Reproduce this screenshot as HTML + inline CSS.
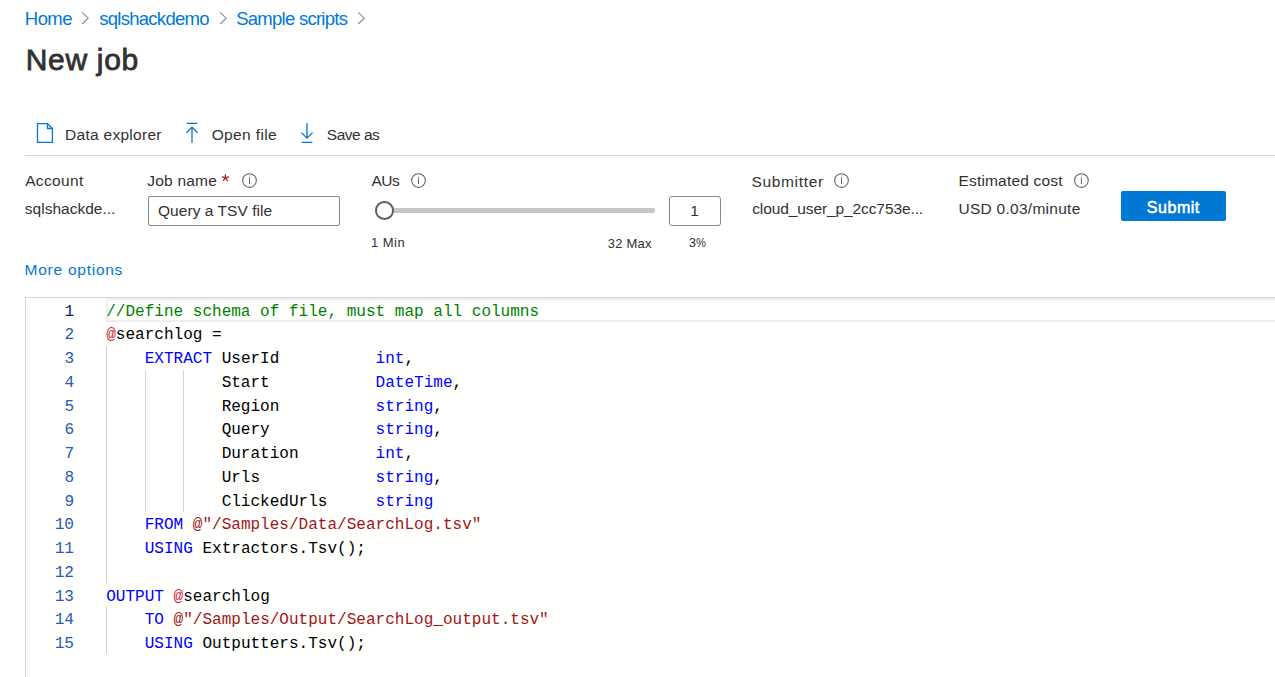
<!DOCTYPE html>
<html><head><meta charset="utf-8"><title>New job</title>
<style>
html,body{margin:0;padding:0;background:#ffffff;width:1275px;height:677px;overflow:hidden;position:relative}
.t{position:absolute;white-space:pre;line-height:1.2}
.ln{position:absolute;left:20px;width:54px;text-align:right;font-family:'Liberation Mono', monospace;font-size:16.05px;line-height:23.76px;height:23.76px;white-space:pre}
.code{position:absolute;left:106.2px;font-family:'Liberation Mono', monospace;font-size:16.05px;line-height:23.76px;height:23.76px;white-space:pre;color:#000}
</style></head><body>
<div class="t" style="left:24.86px;top:7.98px;font-size:18.5px;color:#0078d4;font-weight:400;letter-spacing:-0.568px;font-family:'Liberation Sans', sans-serif;">Home</div>
<div class="t" style="left:99.18px;top:8px;font-size:18.5px;color:#0078d4;font-weight:400;letter-spacing:-0.718px;font-family:'Liberation Sans', sans-serif;">sqlshackdemo</div>
<div class="t" style="left:236.16px;top:8px;font-size:18.5px;color:#0078d4;font-weight:400;letter-spacing:-0.733px;font-family:'Liberation Sans', sans-serif;">Sample scripts</div>
<svg style="position:absolute;left:81px;top:10px" width="10" height="16" viewBox="0 0 10 16"><path d="M1.2 2.3 L7.2 8.2 L1.2 14.0" fill="none" stroke="#8a8886" stroke-width="1.05"/></svg>
<svg style="position:absolute;left:219px;top:10px" width="10" height="16" viewBox="0 0 10 16"><path d="M1.2 2.3 L7.2 8.2 L1.2 14.0" fill="none" stroke="#8a8886" stroke-width="1.05"/></svg>
<svg style="position:absolute;left:357px;top:10px" width="10" height="16" viewBox="0 0 10 16"><path d="M1.2 2.3 L7.2 8.2 L1.2 14.0" fill="none" stroke="#8a8886" stroke-width="1.05"/></svg>
<div class="t" style="left:25.69px;top:42.24px;font-size:30px;color:#323130;font-weight:400;letter-spacing:0.688px;font-family:'Liberation Sans', sans-serif;-webkit-text-stroke:0.8px #323130;">New job</div>
<svg style="position:absolute;left:36px;top:122px" width="19" height="22" viewBox="0 0 19 22"><path d="M1.5 1.6 H11.5 L16.4 6.5 V20.3 H1.5 Z M11.5 1.6 V6.5 H16.4" fill="none" stroke="#0078d4" stroke-width="1.3" stroke-linejoin="miter"/></svg>
<div class="t" style="left:65.0px;top:125.72px;font-size:15.5px;color:#323130;font-weight:400;letter-spacing:0.286px;font-family:'Liberation Sans', sans-serif;">Data explorer</div>
<svg style="position:absolute;left:184px;top:121px" width="16" height="23" viewBox="0 0 16 23"><path d="M2.6 2.4 H13.4 M8 6.6 V21.8 M2.4 11.7 L8 6.1 L13.6 11.7" fill="none" stroke="#0078d4" stroke-width="1.3"/></svg>
<div class="t" style="left:211.69px;top:125.72px;font-size:15.5px;color:#323130;font-weight:400;letter-spacing:0.375px;font-family:'Liberation Sans', sans-serif;">Open file</div>
<svg style="position:absolute;left:299px;top:121px" width="16" height="23" viewBox="0 0 16 23"><path d="M2.6 21.4 H13.4 M8 2 V16.6 M2.4 11.6 L8 17.2 L13.6 11.6" fill="none" stroke="#0078d4" stroke-width="1.3"/></svg>
<div class="t" style="left:326.83px;top:125.72px;font-size:15.5px;color:#323130;font-weight:400;letter-spacing:-0.499px;font-family:'Liberation Sans', sans-serif;">Save as</div>
<div style="position:absolute;left:25px;top:155px;width:1250px;height:1px;background:#d4d4d4"></div>
<div class="t" style="left:25.18px;top:172.26px;font-size:15.5px;color:#323130;font-weight:400;letter-spacing:0.362px;font-family:'Liberation Sans', sans-serif;">Account</div>
<div class="t" style="left:24.85px;top:200px;font-size:15.5px;color:#323130;font-weight:400;letter-spacing:0.001px;font-family:'Liberation Sans', sans-serif;">sqlshackde...</div>
<div class="t" style="left:147.31px;top:172.24px;font-size:15.5px;color:#323130;font-weight:400;letter-spacing:0.206px;font-family:'Liberation Sans', sans-serif;">Job name</div>
<svg style="position:absolute;left:218px;top:170px" width="16" height="16" viewBox="0 0 16 16"><path d="M7.45 7.85 L7.45 4.65 M7.45 7.85 L10.49 6.86 M7.45 7.85 L9.33 10.44 M7.45 7.85 L5.57 10.44 M7.45 7.85 L4.41 6.86" stroke="#a4262c" stroke-width="1.35" stroke-linecap="round" fill="none"/></svg>
<svg style="position:absolute;left:241px;top:172px" width="18" height="18" viewBox="0 0 18 18"><circle cx="8.5" cy="8.5" r="6.85" fill="none" stroke="#605e5c" stroke-width="1.05"/><path d="M8.5 6.5 V12.0" stroke="#605e5c" stroke-width="1"/><circle cx="8.5" cy="5.3" r="0.65" fill="#605e5c"/></svg>
<div style="position:absolute;left:148px;top:196px;width:190px;height:28px;border:1px solid #8a8886;border-radius:2px;background:#fff"></div>
<div class="t" style="left:158.01px;top:202.24px;font-size:15.5px;color:#323130;font-weight:400;letter-spacing:0.044px;font-family:'Liberation Sans', sans-serif;">Query a TSV file</div>
<div class="t" style="left:371.52px;top:172.26px;font-size:15.5px;color:#323130;font-weight:400;letter-spacing:-0.525px;font-family:'Liberation Sans', sans-serif;">AUs</div>
<svg style="position:absolute;left:410px;top:172px" width="18" height="18" viewBox="0 0 18 18"><circle cx="8.5" cy="8.5" r="6.85" fill="none" stroke="#605e5c" stroke-width="1.05"/><path d="M8.5 6.5 V12.0" stroke="#605e5c" stroke-width="1"/><circle cx="8.5" cy="5.3" r="0.65" fill="#605e5c"/></svg>
<div style="position:absolute;left:384px;top:208px;width:271px;height:4.5px;background:#c8c6c4;border-radius:2px"></div>
<div style="position:absolute;left:375.4px;top:201.4px;width:14.6px;height:14.6px;border:2px solid #605e5c;border-radius:50%;background:#fff"></div>
<div class="t" style="left:371.01px;top:234.98px;font-size:13px;color:#323130;font-weight:400;letter-spacing:0.475px;font-family:'Liberation Sans', sans-serif;">1 Min</div>
<div class="t" style="left:607.86px;top:235.66px;font-size:13px;color:#323130;font-weight:400;letter-spacing:0.18px;font-family:'Liberation Sans', sans-serif;">32 Max</div>
<div style="position:absolute;left:669px;top:196px;width:50px;height:28px;border:1px solid #8a8886;border-radius:3px;background:#fff"></div>
<div class="t" style="left:690.14px;top:202.26px;font-size:15.5px;color:#323130;font-weight:400;letter-spacing:0px;font-family:'Liberation Sans', sans-serif;">1</div>
<div class="t" style="left:688.86px;top:234.66px;font-size:13px;color:#323130;font-weight:400;letter-spacing:0px;font-family:'Liberation Sans', sans-serif;">3<span style="display:inline-block;transform:scaleX(0.86);transform-origin:0 50%">%</span></div>
<div class="t" style="left:751.48px;top:172.52px;font-size:15.5px;color:#323130;font-weight:400;letter-spacing:0.664px;font-family:'Liberation Sans', sans-serif;">Submitter</div>
<svg style="position:absolute;left:833px;top:172px" width="18" height="18" viewBox="0 0 18 18"><circle cx="8.5" cy="8.5" r="6.85" fill="none" stroke="#605e5c" stroke-width="1.05"/><path d="M8.5 6.5 V12.0" stroke="#605e5c" stroke-width="1"/><circle cx="8.5" cy="5.3" r="0.65" fill="#605e5c"/></svg>
<div class="t" style="left:752.17px;top:200px;font-size:15.5px;color:#323130;font-weight:400;letter-spacing:-0.1px;font-family:'Liberation Sans', sans-serif;">cloud_user_p_2cc753e...</div>
<div class="t" style="left:958.46px;top:171.58px;font-size:15.5px;color:#323130;font-weight:400;letter-spacing:0.183px;font-family:'Liberation Sans', sans-serif;">Estimated cost</div>
<svg style="position:absolute;left:1073px;top:172px" width="18" height="18" viewBox="0 0 18 18"><circle cx="8.400000000000091" cy="8.5" r="6.85" fill="none" stroke="#605e5c" stroke-width="1.05"/><path d="M8.400000000000091 6.5 V12.0" stroke="#605e5c" stroke-width="1"/><circle cx="8.400000000000091" cy="5.3" r="0.65" fill="#605e5c"/></svg>
<div class="t" style="left:958.46px;top:200px;font-size:15.5px;color:#323130;font-weight:400;letter-spacing:0.269px;font-family:'Liberation Sans', sans-serif;">USD 0.03/minute</div>
<div style="position:absolute;left:1121px;top:191px;width:105px;height:30px;background:#0078d4;border-radius:2px"></div>
<div class="t" style="left:1146.8px;top:198.0px;font-size:16px;color:#ffffff;font-weight:400;letter-spacing:0.54px;font-family:'Liberation Sans', sans-serif;-webkit-text-stroke:0.55px #ffffff;">Submit</div>
<div class="t" style="left:24.5px;top:260.72px;font-size:15.5px;color:#0078d4;font-weight:400;letter-spacing:0.752px;font-family:'Liberation Sans', sans-serif;">More options</div>
<div style="position:absolute;left:25px;top:297px;width:1250px;height:380px;background:#fffffe;border-left:1px solid #d4d4d4;border-top:1px solid #d4d4d4"></div>
<div style="position:absolute;left:106px;top:298px;width:1169px;height:20px;border:2px solid #eeeeee;border-right:none"></div>
<div style="position:absolute;left:106px;top:345.96000000000004px;width:1px;height:236.79999999999995px;background:#d3d3d3"></div>
<div style="position:absolute;left:106px;top:606.44px;width:1px;height:47.3599999999999px;background:#d3d3d3"></div>
<div style="position:absolute;left:145px;top:369.64px;width:1px;height:142.08000000000004px;background:#d3d3d3"></div>
<div style="position:absolute;left:183px;top:369.64px;width:1px;height:142.08000000000004px;background:#d3d3d3"></div>
<div class="ln" style="top:300.6px;color:#0b216f">1</div>
<div class="code" style="top:300.6px"><span style="color:#008000">//Define schema of file, must map all columns</span></div>
<div class="ln" style="top:324.36px;color:#1f5bb0">2</div>
<div class="code" style="top:324.36px"><span style="color:#d02a3a">@</span>searchlog =</div>
<div class="ln" style="top:348.12px;color:#1f5bb0">3</div>
<div class="code" style="top:348.12px">    <span style="color:#0000ff">EXTRACT</span> UserId          <span style="color:#0000ff">int</span>,</div>
<div class="ln" style="top:371.88px;color:#1f5bb0">4</div>
<div class="code" style="top:371.88px">            Start           <span style="color:#0000ff">DateTime</span>,</div>
<div class="ln" style="top:395.64000000000004px;color:#1f5bb0">5</div>
<div class="code" style="top:395.64000000000004px">            Region          <span style="color:#0000ff">string</span>,</div>
<div class="ln" style="top:419.40000000000003px;color:#1f5bb0">6</div>
<div class="code" style="top:419.40000000000003px">            Query           <span style="color:#0000ff">string</span>,</div>
<div class="ln" style="top:443.16px;color:#1f5bb0">7</div>
<div class="code" style="top:443.16px">            Duration        <span style="color:#0000ff">int</span>,</div>
<div class="ln" style="top:466.9200000000001px;color:#1f5bb0">8</div>
<div class="code" style="top:466.9200000000001px">            Urls            <span style="color:#0000ff">string</span>,</div>
<div class="ln" style="top:490.68000000000006px;color:#1f5bb0">9</div>
<div class="code" style="top:490.68000000000006px">            ClickedUrls     <span style="color:#0000ff">string</span></div>
<div class="ln" style="top:514.44px;color:#1f5bb0">10</div>
<div class="code" style="top:514.44px">    <span style="color:#0000ff">FROM</span> <span style="color:#a31515">@"/Samples/Data/SearchLog.tsv"</span></div>
<div class="ln" style="top:538.2px;color:#1f5bb0">11</div>
<div class="code" style="top:538.2px">    <span style="color:#0000ff">USING</span> Extractors.Tsv();</div>
<div class="ln" style="top:561.96px;color:#1f5bb0">12</div>
<div class="code" style="top:561.96px"></div>
<div class="ln" style="top:585.72px;color:#1f5bb0">13</div>
<div class="code" style="top:585.72px"><span style="color:#0000ff">OUTPUT</span> <span style="color:#d02a3a">@</span>searchlog</div>
<div class="ln" style="top:609.48px;color:#1f5bb0">14</div>
<div class="code" style="top:609.48px">    <span style="color:#0000ff">TO</span> <span style="color:#a31515">@"/Samples/Output/SearchLog_output.tsv"</span></div>
<div class="ln" style="top:633.24px;color:#1f5bb0">15</div>
<div class="code" style="top:633.24px">    <span style="color:#0000ff">USING</span> Outputters.Tsv();</div>
</body></html>
